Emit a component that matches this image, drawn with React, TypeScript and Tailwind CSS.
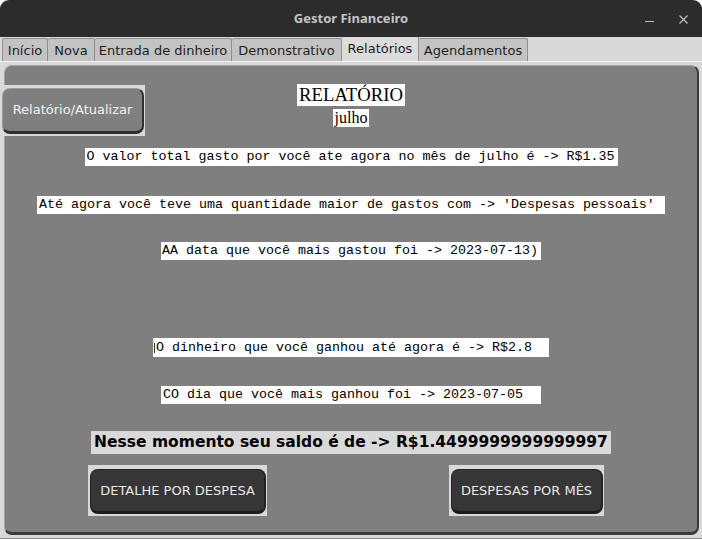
import React from "react";

const tabs = [
  { label: "Início", w: "w-[46px]" },
  { label: "Nova", w: "w-[47px]" },
  { label: "Entrada de dinheiro", w: "w-[137px]" },
  { label: "Demonstrativo", w: "w-[110px]" },
  { label: "Relatórios", w: "w-[77px]", active: true },
  { label: "Agendamentos", w: "w-[109px]" },
];

function MonoLine({
  text,
  w,
  h = "h-[18px]",
  mt,
  shift = "ml-[2px]",
  bar,
}: {
  text: string;
  w: string;
  h?: string;
  mt: string;
  shift?: string;
  bar?: boolean;
}) {
  return (
    <div
      className={`${w} ${h} ${mt} bg-white overflow-hidden whitespace-pre flex items-center font-['Liberation_Mono',monospace] text-[13.33px] leading-[18px] text-black`}
    >
      {bar && <div className="ml-[1px] w-[1px] h-[10px] bg-[#333] shrink-0" />}
      <span className={`block ${shift}`}>{text}</span>
    </div>
  );
}

function DarkButton({ label, outer, inner }: { label: string; outer: string; inner: string }) {
  return (
    <div className={`${outer} h-[51px] bg-[#d9d9d9] pt-[4px] pl-[2px]`}>
      <div
        className={`${inner} h-[45px] rounded-[8px] bg-[#363636] border border-[#222] border-b-[3px] border-r-[2px] border-b-[#1c1c1c] flex items-center justify-center text-[13px] text-[#e8e8e8] font-['DejaVu_Sans',sans-serif]`}
      >
        {label}
      </div>
    </div>
  );
}

export default function App() {
  return (
    <div className="w-[702px] h-[539px] bg-white">
      <div className="relative w-full h-full rounded-t-[9px] overflow-hidden bg-[#d9d9d9] flex flex-col">
        {/* barra de título */}
        <div className="h-[37px] bg-[#2c2c2c] flex items-center justify-center relative shrink-0">
          <span className="font-['Noto_Sans',sans-serif] font-bold text-[13px] text-[#c4c4c4]">
            Gestor Financeiro
          </span>
          <div className="absolute left-[645px] top-[21px] w-[9px] h-[1px] bg-[#bdbdbd]" />
          <svg className="absolute left-[679px] top-[15px]" width="9" height="9" viewBox="0 0 9 9">
            <path d="M0.5 0.5 L8.5 8.5 M8.5 0.5 L0.5 8.5" stroke="#bdbdbd" strokeWidth="1.2" />
          </svg>
        </div>

        {/* abas */}
        <div className="h-[24px] flex pl-[2px] shrink-0 font-['DejaVu_Sans',sans-serif] text-[13px] text-[#1e1e1e]">
          {tabs.map((t, i) => (
            <div
              key={t.label}
              className={`${t.w} h-[24px] flex items-center justify-center border-t border-r border-[#8f8f8f] rounded-t-[2px] ${
                i === 0 ? "border-l" : ""
              } ${t.active ? "bg-[#dcdcdc] mt-[-1px] h-[25px]" : "bg-[#c3c3c3] mt-[1px]"}`}
            >
              {t.label}
            </div>
          ))}
        </div>
        <div className="h-[1px] bg-[#f2f2f2] shrink-0" />
        <div className="h-[3px] shrink-0" />

        {/* quadro principal */}
        <div className="ml-[4px] w-[695px] h-[470px] shrink-0 rounded-[8px] bg-[#7f7f7f] border border-[#a3a3a3] border-b-[3px] border-r-[2px] border-b-[#3a3a3a] border-r-[#3a3a3a] flex flex-col items-center">
          <div className="mt-[18px] h-[22px] px-[2px] bg-white font-['Liberation_Serif',serif] text-[18.7px] leading-[22px] text-black">
            RELATÓRIO
          </div>
          <div className="mt-[3px] h-[18px] px-[2px] bg-white font-['Liberation_Serif',serif] text-[16px] leading-[18px] text-black">
            julho
          </div>

          <MonoLine
            mt="mt-[21px]"
            w="w-[533px]"
            text="O valor total gasto por você ate agora no mês de julho é -> R$1.35"
          />
          <MonoLine
            mt="mt-[30px]"
            w="w-[628px]"
            text="Até agora você teve uma quantidade maior de gastos com -> 'Despesas pessoais'"
          />
          <MonoLine
            mt="mt-[28px]"
            w="w-[380px]"
            shift="ml-[1px]"
            text="AA data que você mais gastou foi -> 2023-07-13)"
          />
          <MonoLine
            mt="mt-[78px]"
            w="w-[396px]"
            h="h-[19px]"
            bar
            shift="ml-[1px]"
            text="O dinheiro que você ganhou até agora é -> R$2.8"
          />
          <MonoLine
            mt="mt-[29px]"
            w="w-[380px]"
            text="CO dia que você mais ganhou foi -> 2023-07-05"
          />

          <div className="mt-[27px] h-[23px] px-[3px] bg-[#d9d9d9] font-['DejaVu_Sans',sans-serif] font-bold text-[15.5px] leading-[23px] text-black whitespace-nowrap">
            Nesse momento seu saldo é de -&gt; R$1.4499999999999997
          </div>

          <div className="mt-[11px] self-stretch flex pl-[83px]">
            <DarkButton label="DETALHE POR DESPESA" outer="w-[179px]" inner="w-[176px]" />
            <DarkButton label="DESPESAS POR MÊS" outer="w-[155px] ml-[182px]" inner="w-[152px]" />
          </div>
        </div>

        <div className="flex-1" />
        <div className="h-[1px] bg-[#8c8c8c] shrink-0" />

        {/* botão sobreposto */}
        <div className="absolute left-0 top-[85px] w-[145px] h-[51px] bg-[#d9d9d9] pt-[3px] pl-[2px]">
          <div className="w-[142px] h-[46px] rounded-[8px] bg-[#7f7f7f] border border-[#9a9a9a] border-b-[3px] border-r-[2px] border-b-[#2e2e2e] border-r-[#2e2e2e] flex items-center justify-center font-['DejaVu_Sans',sans-serif] text-[13px] text-[#eef2f6]">
            Relatório/Atualizar
          </div>
        </div>
      </div>
    </div>
  );
}
